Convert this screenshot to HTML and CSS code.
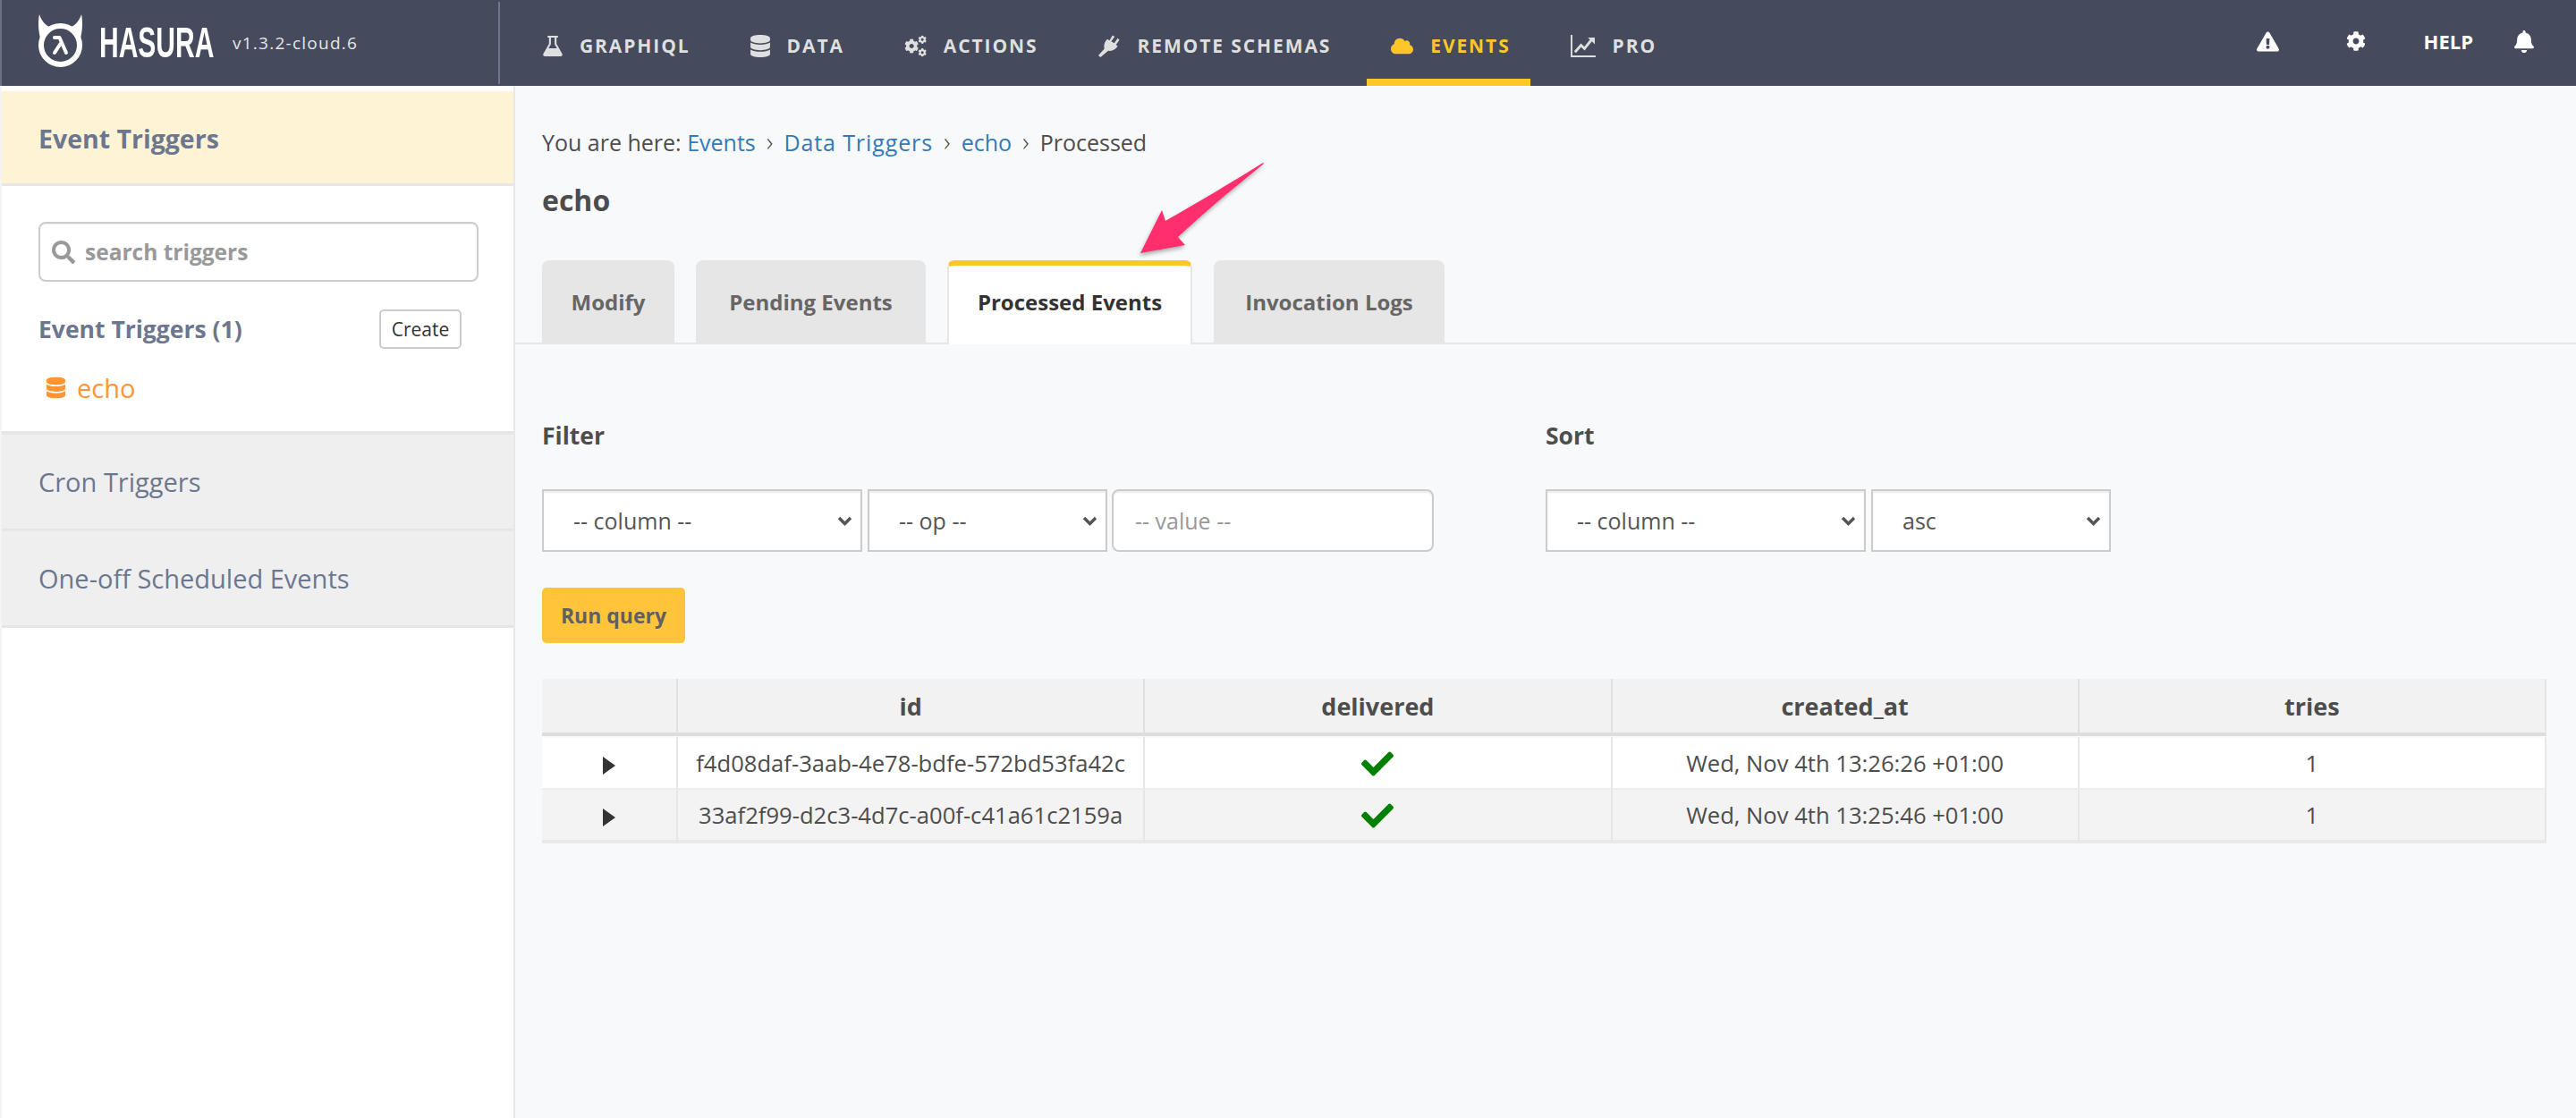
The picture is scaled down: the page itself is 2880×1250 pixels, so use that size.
FILE: index.html
```html
<!DOCTYPE html>
<html lang="en">
<head>
    <meta charset="UTF-8">
    <title>Hasura Console - Events</title>
    <link rel="stylesheet" href="styles.css">
</head>
<body>
    <svg class="defs" width="0" height="0">
        <symbol id="i-db" viewBox="0 0 448 512"><path d="M448 73.143v45.714C448 159.143 347.667 192 224 192S0 159.143 0 118.857V73.143C0 32.857 100.333 0 224 0s224 32.857 224 73.143zM448 176v102.857C448 319.143 347.667 352 224 352S0 319.143 0 278.857V176c48.125 33.143 136.208 48.572 224 48.572S399.874 209.143 448 176zm0 160v102.857C448 479.143 347.667 512 224 512S0 479.143 0 438.857V336c48.125 33.143 136.208 48.572 224 48.572S399.874 369.143 448 336z"/></symbol>
        <symbol id="i-cog" viewBox="0 0 512 512"><path d="M487.4 315.7l-42.6-24.6c4.3-23.2 4.3-47 0-70.2l42.6-24.6c4.9-2.8 7.1-8.6 5.5-14-11.1-35.6-30-67.8-54.7-94.6-3.8-4.1-10-5.1-14.8-2.3L380.8 110c-17.9-15.4-38.5-27.3-60.8-35.1V25.8c0-5.6-3.9-10.5-9.4-11.7-36.7-8.2-74.3-7.8-109.2 0-5.5 1.2-9.4 6.1-9.4 11.7V75c-22.2 7.9-42.8 19.8-60.8 35.1L88.7 85.5c-4.9-2.8-11-1.9-14.8 2.3-24.7 26.7-43.6 58.9-54.7 94.6-1.7 5.4.6 11.2 5.5 14L67.3 221c-4.3 23.2-4.3 47 0 70.2l-42.6 24.6c-4.9 2.8-7.1 8.6-5.5 14 11.1 35.6 30 67.8 54.7 94.6 3.8 4.1 10 5.1 14.8 2.3l42.6-24.6c17.9 15.4 38.5 27.3 60.8 35.1v49.2c0 5.6 3.9 10.5 9.4 11.7 36.7 8.2 74.3 7.8 109.2 0 5.5-1.2 9.4-6.1 9.4-11.7v-49.2c22.2-7.9 42.8-19.8 60.8-35.1l42.6 24.6c4.9 2.8 11 1.9 14.8-2.3 24.7-26.7 43.6-58.9 54.7-94.6 1.5-5.5-.7-11.3-5.6-14.1zM256 336c-44.1 0-80-35.9-80-80s35.9-80 80-80 80 35.9 80 80-35.9 80-80 80z"/></symbol>
        <symbol id="i-check" viewBox="0 0 512 512"><path d="M173.898 439.404l-166.4-166.4c-9.997-9.997-9.997-26.206 0-36.204l36.203-36.204c9.997-9.998 26.207-9.998 36.204 0L192 312.69 432.095 72.596c9.997-9.997 26.207-9.997 36.204 0l36.203 36.204c9.997 9.997 9.997 26.206 0 36.204l-294.4 294.401c-9.998 9.997-26.207 9.997-36.204-.001z"/></symbol>
    </svg>

    <header class="navbar">
        <div class="brand">
            <svg class="logo" viewBox="0 0 49 60" width="49" height="60">
                <path d="M1 1C-1 10 0 22 3 31L13 15C9 14 4 10 1 1ZM48 1C50 10 49 22 46 31L36 15C40 14 45 10 48 1Z" fill="#fff"/>
                <circle cx="24.5" cy="35.5" r="21.5" fill="none" stroke="#fff" stroke-width="6"/>
                <path d="M18 27H23.5L31 44M24.5 34L18 44" fill="none" stroke="#fff" stroke-width="4" stroke-linecap="round" stroke-linejoin="round"/>
            </svg>
            <span class="wordmark">HASURA</span>
            <span class="version">v1.3.2-cloud.6</span>
        </div>
        <nav class="nav-links">
            <a class="nav-link">
                <svg class="nav-icon icon-sm" viewBox="0 0 21 22"><path d="M5 0H16V2H14.5V8.5L20.5 19C21.3 20.5 20.4 22 18.8 22H2.2C.6 22-.3 20.5.5 19L6.5 8.5V2H5ZM8.5 2V9L6 13.5H15L12.5 9V2Z" fill-rule="evenodd"/></svg>
                <span>GRAPHIQL</span>
            </a>
            <a class="nav-link">
                <svg class="nav-icon icon-sm" viewBox="0 0 448 512"><use href="#i-db"/></svg>
                <span>DATA</span>
            </a>
            <a class="nav-link">
                <svg class="nav-icon" viewBox="0 0 26 25">
                    <use href="#i-cog" x="0" y="4" width="17" height="17"/>
                    <use href="#i-cog" x="16" y="0" width="10" height="10"/>
                    <use href="#i-cog" x="16" y="15" width="10" height="10"/>
                </svg>
                <span>ACTIONS</span>
            </a>
            <a class="nav-link">
                <svg class="nav-icon" viewBox="0 0 25 26"><path d="M17 .5L19.5 2 15.5 7.5 19 9.5 23 4 25 6 21 11.5 23 13 21.500 15C19 17.500 15.500 19 12 18.500L3 26 .5 24 7.500 16C6.500 13 7.500 9 9.500 6.500L11 5 13.500 6.500Z"/></svg>
                <span>REMOTE SCHEMAS</span>
            </a>
            <a class="nav-link active">
                <svg class="nav-icon" viewBox="0 0 640 512"><path d="M537.6 226.6c4.1-10.7 6.4-22.4 6.4-34.6 0-53-43-96-96-96-19.7 0-38.1 6-53.3 16.2C367 64.2 315.3 32 256 32c-88.4 0-160 71.6-160 160 0 2.7.1 5.4.2 8.1C40.2 219.8 0 273.2 0 336c0 79.5 64.5 144 144 144h368c70.7 0 128-57.3 128-128 0-61.900-44-113.600-102.400-125.400z"/></svg>
                <span>EVENTS</span>
            </a>
            <a class="nav-link">
                <svg class="nav-icon icon-lg" viewBox="0 0 29 26"><path d="M1 0V25H29" fill="none" stroke="currentColor" stroke-width="2"/><path d="M5 20L12 12 16 16 24 6" fill="none" stroke="currentColor" stroke-width="3"/><path d="M20 3H28V11Z"/></svg>
                <span>PRO</span>
            </a>
        </nav>
        <div class="nav-right">
            <svg class="warn" viewBox="0 0 576 512"><path d="M569.517 440.013C587.975 472.007 564.806 512 527.94 512H48.054c-36.937 0-59.999-40.055-41.577-71.987L246.423 24.035c18.467-32.009 64.72-31.951 83.154 0l239.94 416.028zM288 354c-25.405 0-46 20.595-46 46s20.595 46 46 46 46-20.595 46-46-20.595-46-46-46zm-43.673-165.346l7.418 136c.347 6.364 5.609 11.346 11.982 11.346h48.546c6.373 0 11.635-4.982 11.982-11.346l7.418-136c.375-6.874-5.098-12.654-11.982-12.654h-63.383c-6.884 0-12.356 5.78-11.981 12.654z"/></svg>
            <svg class="gear" viewBox="0 0 512 512"><use href="#i-cog"/></svg>
            <span class="help">HELP</span>
            <svg class="bell" viewBox="0 0 448 512"><path d="M224 512c35.32 0 63.97-28.65 63.97-64H160.03c0 35.35 28.65 64 63.97 64zm215.39-149.71c-19.32-20.76-55.47-51.99-55.47-154.29 0-77.7-54.48-139.9-127.94-155.16V32c0-17.67-14.32-32-31.98-32s-31.98 14.33-31.98 32v20.84C118.56 68.1 64.08 130.3 64.08 208c0 102.3-36.15 133.53-55.47 154.29-6 6.45-8.66 14.16-8.61 21.71.11 16.4 12.98 32 32.1 32h383.8c19.12 0 32-15.6 32.1-32 .05-7.55-2.61-15.27-8.61-21.71z"/></svg>
        </div>
    </header>

    <div class="page">
        <aside class="sidebar">
            <div class="side-head active">Event Triggers</div>
            <div class="side-body">
                <div class="search">
                    <svg class="search-icon" viewBox="0 0 512 512"><path d="M505 442.7L405.3 343c-4.5-4.5-10.6-7-17-7H372c27.6-35.3 44-79.7 44-128C416 93.1 322.9 0 208 0S0 93.1 0 208s93.1 208 208 208c48.3 0 92.7-16.4 128-44v16.3c0 6.4 2.5 12.5 7 17l99.7 99.7c9.4 9.4 24.6 9.4 33.9 0l28.3-28.3c9.4-9.4 9.4-24.6.1-34zM208 336c-70.7 0-128-57.2-128-128 0-70.7 57.2-128 128-128 70.7 0 128 57.2 128 128 0 70.7-57.2 128-128 128z"/></svg>
                    <input type="text" placeholder="search triggers">
                </div>
                <div class="list-head">
                    <span>Event Triggers (1)</span>
                    <button class="create">Create</button>
                </div>
                <a class="trigger">
                    <svg class="trigger-icon" viewBox="0 0 448 512"><use href="#i-db"/></svg>
                    <span>echo</span>
                </a>
            </div>
            <div class="side-head">Cron Triggers</div>
            <div class="side-head">One-off Scheduled Events</div>
        </aside>

        <main class="content">
            <div class="crumbs">You are here: <a>Events</a><i>›</i><a class="crumb-wide">Data Triggers</a><i>›</i><a>echo</a><i>›</i>Processed</div>
            <h2 class="title">echo</h2>
            <div class="tabs">
                <a class="tab tab-modify">Modify</a>
                <a class="tab tab-pending">Pending Events</a>
                <a class="tab tab-processed active">Processed Events</a>
                <a class="tab tab-logs">Invocation Logs</a>
            </div>

            <div class="query">
                <div class="query-row">
                    <div class="filter">
                        <h4>Filter</h4>
                        <div class="controls">
                            <select class="w-col"><option>-- column --</option></select>
                            <select class="w-op"><option>-- op --</option></select>
                            <input class="w-val" type="text" placeholder="-- value --">
                        </div>
                    </div>
                    <div class="sort">
                        <h4>Sort</h4>
                        <div class="controls">
                            <select class="w-col"><option>-- column --</option></select>
                            <select class="w-dir"><option>asc</option></select>
                        </div>
                    </div>
                </div>
                <button class="run">Run query</button>
            </div>

            <table class="events">
                <colgroup>
                    <col class="c-arrow"><col class="c-data"><col class="c-data"><col class="c-data"><col class="c-data">
                </colgroup>
                <thead>
                    <tr><th></th><th>id</th><th>delivered</th><th>created_at</th><th>tries</th></tr>
                </thead>
                <tbody>
                    <tr>
                        <td><span class="caret"></span></td>
                        <td>f4d08daf-3aab-4e78-bdfe-572bd53fa42c</td>
                        <td><svg class="check" viewBox="0 0 512 512"><use href="#i-check"/></svg></td>
                        <td>Wed, Nov 4th 13:26:26 +01:00</td>
                        <td>1</td>
                    </tr>
                    <tr>
                        <td><span class="caret"></span></td>
                        <td>33af2f99-d2c3-4d7c-a00f-c41a61c2159a</td>
                        <td><svg class="check" viewBox="0 0 512 512"><use href="#i-check"/></svg></td>
                        <td>Wed, Nov 4th 13:25:46 +01:00</td>
                        <td>1</td>
                    </tr>
                </tbody>
            </table>
        </main>
    </div>

    <svg class="arrow" viewBox="0 0 170 125" width="170" height="125">
        <path d="M142 2C110 22 70 46 33 67L29 55 5 103 55 94 47 85C80 54 112 28 143 3Z" fill="#ff2e6c"/>
    </svg>
</body>
</html>
```

FILE: styles.css
```css
* {
    box-sizing: border-box;
}
html, body {
    margin: 0;
    height: 100%;
}
body {
    font-family: "Open Sans", "Noto Sans", sans-serif;
    background: #f8f9fb;
    color: #4d4d4d;
    overflow: hidden;
}
.defs {
    position: absolute;
}

/* top bar */
.navbar {
    display: flex;
    align-items: stretch;
    height: 96px;
    background: #454a5c;
    border-left: 2px solid #6b7184;
}
.brand {
    display: flex;
    align-items: center;
    width: 557px;
    height: 92px;
    margin-top: 2px;
    padding-left: 41px;
    border-right: 2px solid #6d7890;
}
.logo {
    margin-top: -6px;
}
.wordmark {
    width: 128px;
    margin-left: 19px;
    color: #fff;
    font-family: "Liberation Sans", sans-serif;
    font-size: 48px;
    font-weight: 700;
    line-height: 46px;
    transform: scaleX(0.625);
    transform-origin: left center;
    white-space: nowrap;
}
.version {
    margin-left: 21px;
    color: #e6e6e6;
    font-size: 19px;
    letter-spacing: 1.25px;
}
.nav-links {
    display: flex;
    gap: 18px;
    margin-left: 21px;
    flex: 1;
}
.nav-link {
    display: flex;
    align-items: center;
    gap: 19px;
    padding: 14px 22px 0 27px;
    border-bottom: 8px solid transparent;
    color: #dedfdf;
    font-size: 21px;
    font-weight: 700;
    letter-spacing: 1.9px;
    white-space: nowrap;
}
.nav-link.active {
    color: #ffc627;
    border-bottom-color: #ffc627;
}
.nav-icon {
    width: 25px;
    height: 25px;
    fill: currentColor;
}
.icon-sm {
    width: 22px;
}
.icon-lg {
    width: 28px;
}
.nav-right {
    display: flex;
    align-items: center;
    height: 96px;
    padding-bottom: 4px;
    padding-right: 47px;
    color: #fff;
    fill: #fff;
}
.warn {
    width: 25px;
    height: 23px;
    margin-right: 75px;
}
.gear {
    width: 22px;
    height: 22px;
    margin-right: 65px;
}
.help {
    font-size: 22px;
    font-weight: 700;
    margin-right: 46px;
}
.bell {
    width: 22px;
    height: 25px;
}

/* sidebar */
.page {
    display: flex;
    height: calc(100% - 96px);
}
.sidebar {
    flex: none;
    width: 576px;
    padding-top: 6px;
    border-left: 2px solid #f4f4f4;
    border-right: 2px solid #e8e8e8;
    background: #fff;
}
.side-head {
    height: 108px;
    padding-left: 41px;
    background: #efefef;
    border-bottom: 3px solid #e6e6e6;
    color: #6c778f;
    font-size: 29px;
    line-height: 106px;
}
.side-head.active {
    height: 106px;
    background: #fff3d5;
    font-size: 28.5px;
    font-weight: 700;
    line-height: 106px;
}
.side-body {
    height: 278px;
    padding: 40px 40px 0 41px;
    border-bottom: 4px solid #e6e6e6;
}
.search {
    position: relative;
}
.search input {
    width: 492px;
    height: 67px;
    padding: 0 10px 0 50px;
    border: 2px solid #ccc;
    border-radius: 8px;
    font-family: inherit;
    font-size: 24.5px;
    font-weight: 700;
    box-shadow: inset 0 1px 1px rgba(0, 0, 0, .075);
}
.search input::placeholder {
    color: #999;
    opacity: 1;
}
.search-icon {
    position: absolute;
    left: 15px;
    top: 21px;
    width: 26px;
    height: 26px;
    fill: #999;
}
.list-head {
    display: flex;
    align-items: center;
    justify-content: space-between;
    margin-top: 31px;
    padding-right: 18px;
    color: #6c778f;
    font-size: 26.5px;
    font-weight: 700;
}
.create {
    width: 92px;
    height: 44px;
    padding: 0;
    background: #fff;
    border: 2px solid #ccc;
    border-radius: 5px;
    color: #333;
    font-family: inherit;
    font-size: 21px;
}
.trigger {
    display: flex;
    align-items: center;
    gap: 13px;
    margin: 24px 0 0 9px;
    color: #ff9635;
    font-size: 29px;
}
.trigger-icon {
    width: 21px;
    height: 25px;
    fill: currentColor;
}

/* content */
.content {
    flex: 1;
    min-width: 0;
    padding-top: 44px;
}
.crumbs {
    height: 36px;
    padding-left: 30px;
    color: #4d4d4d;
    font-size: 25px;
    line-height: 36px;
}
.crumbs a {
    color: #337ab7;
}
.crumbs .crumb-wide {
    letter-spacing: .9px;
}
.crumbs i {
    margin: 0 12px;
    font-size: 30px;
    font-style: normal;
    font-weight: 300;
}
.title {
    margin: 28px 0 0;
    padding-left: 30px;
    font-size: 32px;
    font-weight: 700;
    line-height: 40px;
}
.tabs {
    display: flex;
    gap: 24px;
    height: 94px;
    margin-top: 47px;
    padding-left: 30px;
    border-bottom: 2px solid #e6e6e6;
}
.tab {
    height: 92px;
    padding-top: 30px;
    background: #e6e6e6;
    border-radius: 8px 8px 0 0;
    color: #666;
    font-size: 24px;
    font-weight: 700;
    text-align: center;
}
.tab-modify {
    width: 148px;
}
.tab-pending {
    width: 257px;
}
.tab-processed {
    width: 274px;
}
.tab-logs {
    width: 258px;
}
.tab.active {
    height: 94px;
    padding-top: 24px;
    background: #fff;
    border-top: 6px solid #ffc627;
    border-left: 2px solid #e6e6e6;
    border-right: 2px solid #e6e6e6;
    color: #333;
}
.query {
    padding: 88px 0 0 30px;
}
.query-row {
    display: flex;
}
.filter {
    width: 1122px;
}
.query h4 {
    margin: 0;
    font-size: 26.5px;
    font-weight: 700;
    line-height: 28px;
}
.controls {
    display: flex;
    gap: 6px;
    margin-top: 46px;
}
.controls select, .controls input {
    height: 70px;
    padding: 0 0 0 33px;
    background-color: #fff;
    border: 2px solid #ccc;
    border-radius: 0;
    color: #555;
    font-family: inherit;
    font-size: 25px;
    box-shadow: inset 0 2px 2px rgba(0, 0, 0, .075);
    appearance: none;
    background-repeat: no-repeat;
    background-position: right 9px center;
    background-size: 17px 11px;
    background-image: url("data:image/svg+xml,%3Csvg xmlns='http://www.w3.org/2000/svg' viewBox='0 0 17 11'%3E%3Cpath d='M2 2l6.500 6.500L15 2' fill='none' stroke='%23555' stroke-width='3.500'/%3E%3C/svg%3E");
}
.controls input {
    background-image: none;
    border-radius: 8px;
    padding-left: 24px;
}
.controls input::placeholder {
    color: #999;
    opacity: 1;
}
.w-col {
    width: 358px;
}
.w-op {
    width: 268px;
}
.w-val {
    width: 360px;
    margin-left: -1px;
}
.w-dir {
    width: 268px;
}
.run {
    display: block;
    width: 160px;
    height: 62px;
    margin-top: 40px;
    padding: 0;
    background: #ffc53a;
    border: 0;
    border-radius: 5px;
    color: #606060;
    font-family: inherit;
    font-size: 23px;
    font-weight: 700;
}
.events {
    width: 2241px;
    margin: 40px 0 0 30px;
    border-collapse: separate;
    border-spacing: 0;
    table-layout: fixed;
    font-size: 25.6px;
}
.c-arrow {
    width: 152px;
}
.events th {
    height: 64px;
    background: #f2f2f2;
    border-right: 2px solid #e0e0e0;
    border-bottom: 4px solid #ddd;
    font-size: 27px;
    font-weight: 700;
    text-align: center;
}
.events td {
    height: 58px;
    padding: 0;
    border-right: 2px solid #e6e6e6;
    border-bottom: 2px solid #eee;
    background: #fff;
    text-align: center;
    white-space: nowrap;
}
.events tbody tr:first-child td {
    height: 60px;
    border-top: 2px solid #f8f9fb;
}
.events tbody tr:nth-child(2) td {
    background: #f3f3f3;
    border-bottom: 4px solid #e9e9e9;
    height: 60px;
}
.events th:last-child, .events td:last-child {
    border-right: 2px solid #e6e6e6;
}
.caret {
    display: inline-block;
    border-left: 14px solid #333;
    border-top: 10px solid transparent;
    border-bottom: 10px solid transparent;
    vertical-align: middle;
}
.check {
    width: 36px;
    height: 36px;
    fill: #008000;
    vertical-align: middle;
}

/* annotation on top of the page */
.arrow {
    position: absolute;
    left: 1270px;
    top: 180px;
    filter: drop-shadow(-1px 3px 2px rgba(0, 0, 0, .3));
}
```
